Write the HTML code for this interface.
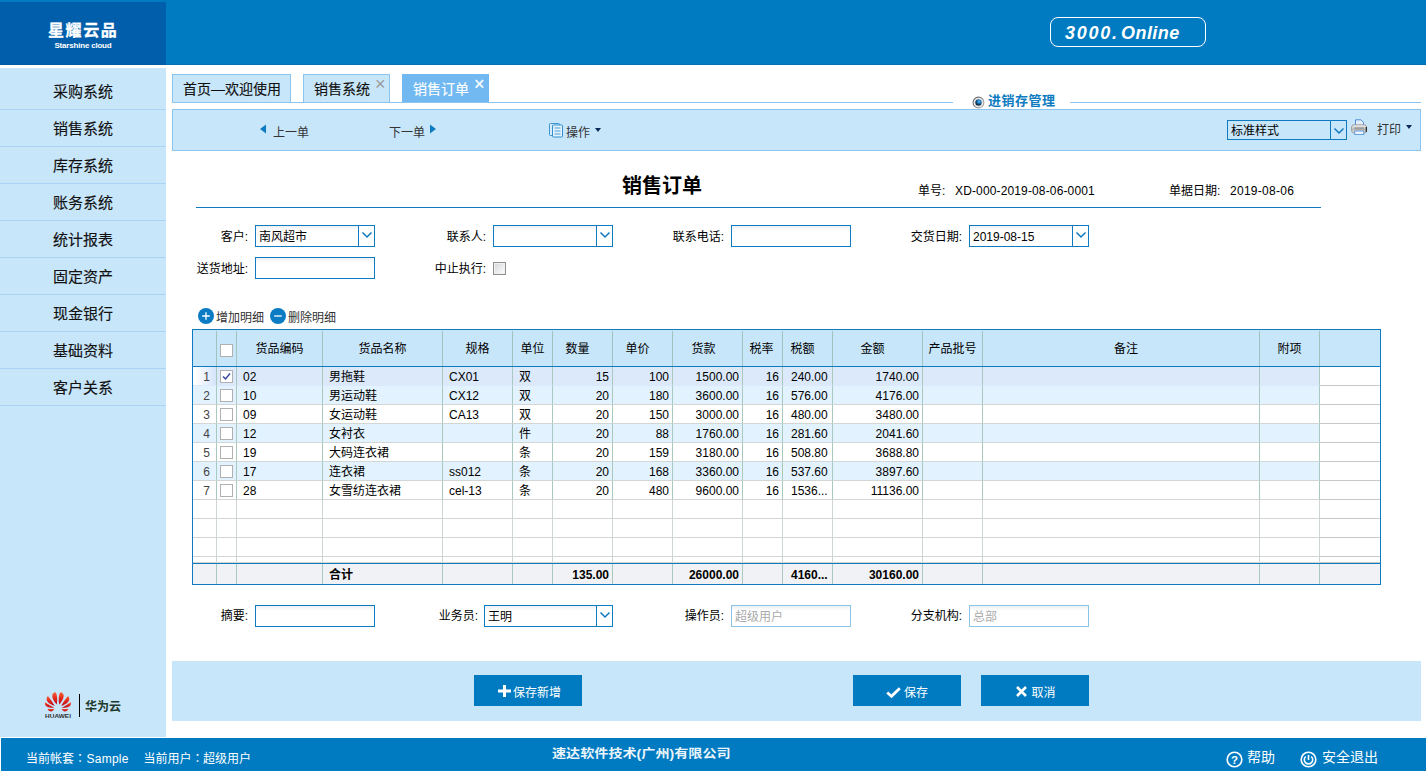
<!DOCTYPE html>
<html lang="zh-CN">
<head>
<meta charset="utf-8">
<title>销售订单</title>
<style>
*{box-sizing:border-box;margin:0;padding:0}
html,body{width:1426px;height:771px;overflow:hidden;background:#fff}
body{position:relative;font-family:"Liberation Sans","Noto Sans CJK SC",sans-serif;font-size:12px;color:#000}
.abs{position:absolute}
#hdr{left:0;top:0;width:1426px;height:65px;background:#007bc1;border-bottom:1px solid #0070b6}
#logo{left:0;top:2px;width:166px;height:63px;background:#005eab;border-bottom:1px solid #0059a5;color:#fff;text-align:center}
#logo .t1{position:absolute;left:0;width:166px;top:19px;font-size:16px;font-weight:bold;line-height:20px;letter-spacing:1.6px;text-indent:0.4px;-webkit-text-stroke:0.3px #fff}
#logo .t2{position:absolute;left:0;width:166px;top:38.5px;font-size:8px;font-weight:bold;line-height:10px;letter-spacing:-0.2px}
#badge{left:1050px;top:17px;width:156px;height:30px;border:1.5px solid #fff;border-radius:8px;color:#fff;font-style:italic;font-weight:bold;font-size:18px;line-height:31px;white-space:nowrap}
#badge span{position:absolute;top:-0.5px}
#side{left:0;top:68px;width:166px;height:669px;background:#c8e6fa}
.mi{position:absolute;left:0;width:166px;height:37px;border-bottom:1px solid #a9d4f5;text-align:center;font-size:15px;line-height:38px;color:#111;-webkit-text-stroke:0.15px #111}
.tab{position:absolute;top:74px;height:28px;border:1px solid #8cc4f0;border-bottom:none;background:#c8e6fa;font-size:14px;line-height:29px;padding-left:10px;color:#111}
.tab{-webkit-text-stroke:0.15px #111}
.tab.act{background:#72b9f2;border-color:#72b9f2;color:#fff;-webkit-text-stroke:0.15px #fff}
.tab .x{position:absolute;top:-5px;font-size:18px;color:#999;font-weight:normal;-webkit-text-stroke:0;margin-left:1px}
.tab.act .x{color:#fff;-webkit-text-stroke:0.25px #fff}
.hl{position:absolute;height:1px;background:#8cc4f0}
#tb{left:172px;top:109px;width:1249px;height:42px;background:#c8e6fa;border:1px solid #8cc4f0}
.lbl{position:absolute;text-align:right;font-size:12px;line-height:14px;white-space:nowrap}
.inp{position:absolute;height:22px;border:1px solid #0e7ac0;background:linear-gradient(#edf0f3,#fff 5px);font-size:12px;line-height:22px;padding-left:3px;white-space:nowrap}
.inp.dis{border-color:#8cc4e8;color:#aaa}
.inp .dd{position:absolute;right:0;top:0;width:16px;height:20px;border-left:1px solid #0e7ac0;background:#fff}
.inp .dd svg{position:absolute;left:2px;top:5px}
#grid{left:192px;top:329px;width:1189px;height:256px;border:1px solid #0e7ac0;background:#fff;overflow:hidden}
#gh{position:absolute;left:0;top:0;width:1187px;height:37px;background:#c8e6fa;border-bottom:1px solid #0e7ac0}
.hc{position:absolute;top:1px;height:35px;line-height:36px;text-align:center;font-size:12px;border-right:1px solid #9fc4c0}
.row{position:absolute;left:0;width:1187px;height:19px}
.c{position:absolute;top:0;height:19px;line-height:19px;font-size:12px;white-space:nowrap;overflow:hidden;border-right:1px solid #a9c8c0;border-bottom:1px solid #d2d6d4}
.r{text-align:right;padding-right:3px}
.rn{text-align:right;padding-right:6px;color:#444}
.l{padding-left:6px}
.btn{position:absolute;top:675px;height:31px;width:108px;background:#007bc1;color:#fff;font-size:12px;line-height:37px;text-align:center;overflow:hidden}
#ftr{left:1px;top:738px;width:1425px;height:33px;background:#007bc1;color:#fff}
.cb{position:absolute;left:3px;width:13px;height:13px;border:1px solid #b0b0b0;background:#fff;display:block}
.cb svg{position:absolute;left:0;top:0}
.ft{top:751px;color:#fff;font-size:12px;line-height:16px;white-space:nowrap}
.cl{font-family:"Liberation Sans","Noto Sans CJK JP",sans-serif}
</style>
</head>
<body>
<div id="hdr" class="abs"></div>
<div id="logo" class="abs"><div class="t1">星耀云品</div><div class="t2">Starshine cloud</div></div>
<div id="badge" class="abs"><span style="left:14px;letter-spacing:1.7px">3000</span><span style="left:61px">.</span><span style="left:70px;letter-spacing:0.45px">Online</span></div>
<div id="side" class="abs"></div>
<div class="mi" style="top:73px">采购系统</div>
<div class="mi" style="top:110px">销售系统</div>
<div class="mi" style="top:147px">库存系统</div>
<div class="mi" style="top:184px">账务系统</div>
<div class="mi" style="top:221px">统计报表</div>
<div class="mi" style="top:258px">固定资产</div>
<div class="mi" style="top:295px">现金银行</div>
<div class="mi" style="top:332px">基础资料</div>
<div class="mi" style="top:369px">客户关系</div>
<div class="abs" style="left:79px;top:694px;width:1px;height:23px;background:#000"></div>
<div class="abs" style="left:85px;top:699px;font-size:12px;font-weight:bold;line-height:16px;color:#1f3a2c">华为云</div>
<svg class="abs" style="left:44px;top:691px" width="29" height="28" viewBox="0 0 29 28">
<defs><linearGradient id="hw" x1="0" y1="0" x2="0" y2="1"><stop offset="0" stop-color="#f4683c"/><stop offset="0.450" stop-color="#e62a1e"/><stop offset="1" stop-color="#b90c1a"/></linearGradient>
<g id="hwp"><path d="M14.300 12.800C13.600 8 13.800 2.500 15.500 0.400C18 0.300 19.200 2.500 18.800 5C18.300 8 16.200 11 14.300 12.800Z"/><path d="M16.400 14.200C18.500 10.500 21.500 6 23.300 4.300C25 6 24.800 8.500 23.500 10C21.800 12 19 13.500 16.400 14.200Z"/><path d="M16.800 15.900C20 14.500 23.500 11.800 26.100 10.500C26.600 12.500 25.600 14.300 24 15C22 15.900 19 16.200 16.800 15.900Z"/><path d="M16.600 16.900C19 17.500 21.500 17.300 23.600 16.900C23 18.600 21.500 19.600 20 19.600C18.600 19.500 17.400 18.300 16.600 16.900Z"/></g></defs>
<g transform="translate(0.800,0.800)" fill="url(#hw)"><use href="#hwp"/><use href="#hwp" transform="translate(26.300,0) scale(-1,1)"/></g>
<text x="14" y="26.700" font-size="5.400" font-weight="bold" text-anchor="middle" fill="#333" font-family="Liberation Sans, sans-serif" textLength="26" lengthAdjust="spacingAndGlyphs">HUAWEI</text>
</svg>

<div class="tab" style="left:172px;width:119px">首页—欢迎使用</div>
<div class="tab" style="left:303px;width:87px">销售系统<span class="x" style="left:70px">×</span></div>
<div class="tab act" style="left:402px;width:87px">销售订单<span class="x" style="left:70px">×</span></div>
<div class="hl" style="left:172px;top:102px;width:781px"></div>
<div class="hl" style="left:1070px;top:102px;width:351px"></div>
<svg class="abs" style="left:971.500px;top:95.500px" width="13" height="13" viewBox="0 0 13 13"><defs><radialGradient id="rd" cx="0.600" cy="0.350" r="0.700"><stop offset="0" stop-color="#5ec0f8"/><stop offset="0.400" stop-color="#1f78b8"/><stop offset="0.850" stop-color="#0b2238"/><stop offset="1" stop-color="#0b2238"/></radialGradient><linearGradient id="rr" x1="0" y1="0" x2="1" y2="1"><stop offset="0" stop-color="#555"/><stop offset="1" stop-color="#bbb"/></linearGradient></defs><circle cx="6.500" cy="6.500" r="5.400" fill="#f4f4f4" stroke="url(#rr)" stroke-width="1.100"/><circle cx="6.500" cy="6.500" r="4" fill="#fff" stroke="#d5d5d5" stroke-width="0.600"/><circle cx="6.500" cy="6.500" r="3.200" fill="url(#rd)"/></svg>
<div class="abs" style="left:988px;top:93px;font-size:13px;font-weight:bold;color:#0e7ac0;line-height:16px;letter-spacing:0.5px">进销存管理</div>

<div id="tb" class="abs"></div>
<svg class="abs" style="left:259px;top:124px" width="8" height="10" viewBox="0 0 8 10"><path d="M7 0.500 L1 5 L7 9.500 Z" fill="#0e7ac0"/></svg>
<div class="abs" style="left:273px;top:125px;font-size:12px;line-height:16px;color:#333">上一单</div>
<div class="abs" style="left:389px;top:125px;font-size:12px;line-height:16px;color:#333">下一单</div>
<svg class="abs" style="left:429px;top:124px" width="8" height="10" viewBox="0 0 8 10"><path d="M1 0.500 L7 5 L1 9.500 Z" fill="#0e7ac0"/></svg>
<svg class="abs" style="left:549px;top:123px" width="15" height="15" viewBox="0 0 15 15"><rect x="0.500" y="0.500" width="10" height="12" rx="0.800" fill="#d6ecfb" stroke="#3d97d3"/><rect x="3.500" y="2" width="10" height="12" rx="0.800" fill="#e4f2fc" stroke="#2f8fd0"/><path d="M5.500 5h6M5.500 8h6M5.500 11h6" stroke="#4aa0d8" stroke-width="1.200"/></svg>
<div class="abs" style="left:566px;top:125px;font-size:12px;line-height:16px;color:#333">操作</div>
<svg class="abs" style="left:595px;top:128px" width="6" height="4" viewBox="0 0 6 4"><path d="M0 0h6L3 4Z" fill="#0a2a5e"/></svg>
<div class="inp" style="left:1227px;top:120px;width:120px;height:20px;line-height:20px;background:#c8e6fa">标准样式<span class="dd" style="height:18px;background:#c8e6fa"><svg width="12" height="8" viewBox="0 0 12 8" style="top:6px"><path d="M1.500 1.500L6 6L10.500 1.500" fill="none" stroke="#0e7ac0" stroke-width="1.500"/></svg></span></div>
<svg class="abs" style="left:1351px;top:119px" width="17" height="17" viewBox="0 0 17 17"><defs><linearGradient id="pg" x1="0" y1="0" x2="0" y2="1"><stop offset="0" stop-color="#f6f6f6"/><stop offset="0.550" stop-color="#b9b9b9"/><stop offset="1" stop-color="#ececec"/></linearGradient></defs><path d="M4.500 7V0.800h5.500l2.500 2.500V7" fill="#e3edfb" stroke="#4a8fd8"/><rect x="0.600" y="5.800" width="15" height="8.200" rx="2.400" fill="url(#pg)" stroke="#8c8c8c" stroke-width="0.800"/><path d="M15.300 8v5" stroke="#222" stroke-width="1.200"/><rect x="3.500" y="8.200" width="9.500" height="2.200" fill="#7d7d7d" opacity="0.550"/><rect x="3.800" y="12" width="9" height="3.600" fill="#eef4fd" stroke="#4a8fd8" stroke-width="0.800"/></svg>
<div class="abs" style="left:1377px;top:122px;font-size:12px;line-height:16px;color:#333">打印</div>
<svg class="abs" style="left:1405.500px;top:125px" width="6" height="4" viewBox="0 0 6 4"><path d="M0 0h6L3 4Z" fill="#0a2a5e"/></svg>

<div class="abs" style="left:622px;top:173px;font-size:20px;font-weight:bold;line-height:26px">销售订单</div>
<div class="abs" style="left:918px;top:184px;line-height:14px">单号:</div>
<div class="abs" style="left:955px;top:184px;line-height:14px;letter-spacing:0.14px">XD-000-2019-08-06-0001</div>
<div class="abs" style="left:1169px;top:184px;line-height:14px">单据日期:</div>
<div class="abs" style="left:1230px;top:184px;line-height:14px;letter-spacing:0.27px">2019-08-06</div>
<div class="abs" style="left:196px;top:207px;width:1125px;height:1px;background:#0e7ac0"></div>
<div class="lbl" style="left:148px;width:100px;top:230px">客户:</div>
<div class="inp " style="left:255px;top:225px;width:120px">南风超市<span class="dd"><svg width="12" height="8" viewBox="0 0 12 8"><path d="M1.500 1.500L6 6L10.500 1.500" fill="none" stroke="#0e7ac0" stroke-width="1.500"/></svg></span></div>
<div class="lbl" style="left:386px;width:100px;top:230px">联系人:</div>
<div class="inp " style="left:493px;top:225px;width:120px"><span class="dd"><svg width="12" height="8" viewBox="0 0 12 8"><path d="M1.500 1.500L6 6L10.500 1.500" fill="none" stroke="#0e7ac0" stroke-width="1.500"/></svg></span></div>
<div class="lbl" style="left:624px;width:100px;top:230px">联系电话:</div>
<div class="inp " style="left:731px;top:225px;width:120px"></div>
<div class="lbl" style="left:862px;width:100px;top:230px">交货日期:</div>
<div class="inp " style="left:969px;top:225px;width:120px">2019-08-15<span class="dd"><svg width="12" height="8" viewBox="0 0 12 8"><path d="M1.500 1.500L6 6L10.500 1.500" fill="none" stroke="#0e7ac0" stroke-width="1.500"/></svg></span></div>
<div class="lbl" style="left:148px;width:100px;top:262px">送货地址:</div>
<div class="inp " style="left:255px;top:257px;width:120px"></div>
<div class="lbl" style="left:386px;width:100px;top:262px">中止执行:</div>
<div class="abs" style="left:493px;top:262px;width:13px;height:13px;border:1px solid #8e8f8f;background:linear-gradient(135deg,#d3d6da,#f6f6f6 80%);box-shadow:inset 0 0 0 1px #f2f2f2"></div>
<svg class="abs" style="left:198px;top:308px" width="16" height="16" viewBox="0 0 16 16"><circle cx="8" cy="8" r="8" fill="#0b7bc3"/><path d="M4.200 8h7.600M8 4.200v7.600" stroke="#fff" stroke-width="1.300"/></svg>
<div class="abs" style="left:216px;top:310px;line-height:16px;color:#333">增加明细</div>
<svg class="abs" style="left:270px;top:308px" width="16" height="16" viewBox="0 0 16 16"><circle cx="8" cy="8" r="8" fill="#0b7bc3"/><path d="M4.200 8h7.600" stroke="#fff" stroke-width="1.300"/></svg>
<div class="abs" style="left:288px;top:310px;line-height:16px;color:#333">删除明细</div>

<div id="grid" class="abs">
<div id="gh"><div class="hc" style="left:0px;width:24px;"></div><div class="hc" style="left:24px;width:20px;"><span class="cb" style="top:13px"></span></div><div class="hc" style="left:44px;width:86px;">货品编码</div><div class="hc" style="left:130px;width:120px;">货品名称</div><div class="hc" style="left:250px;width:70px;">规格</div><div class="hc" style="left:320px;width:40px;">单位</div><div class="hc" style="left:360px;width:60px;padding-right:10px;">数量</div><div class="hc" style="left:420px;width:60px;padding-right:10px;">单价</div><div class="hc" style="left:480px;width:70px;padding-right:8px;">货款</div><div class="hc" style="left:550px;width:40px;padding-right:2px;">税率</div><div class="hc" style="left:590px;width:50px;padding-right:10px;">税额</div><div class="hc" style="left:640px;width:90px;padding-right:10px;">金额</div><div class="hc" style="left:730px;width:60px;">产品批号</div><div class="hc" style="left:790px;width:277px;padding-left:10px;">备注</div><div class="hc" style="left:1067px;width:60px;">附项</div><div class="hc" style="left:1127px;width:61px;border-right:none;"></div></div>
<div class="row" style="top:37px;height:19px"><div class="c rn" style="left:0px;width:24px;height:19px;line-height:21px;background:#dbe9fb;border-bottom-color:#dbe9fb;background:linear-gradient(90deg,#fff 10%,#d4e4fa 100%);">1</div><div class="c" style="left:24px;width:20px;height:19px;line-height:21px;background:#dbe9fb;border-bottom-color:#dbe9fb;"><span class="cb" style="top:3px"><svg width="11" height="11" viewBox="0 0 11 11"><path d="M2 5.500L4.500 8L9 2.500" fill="none" stroke="#3b4aa0" stroke-width="1.5"/></svg></span></div><div class="c l" style="left:44px;width:86px;height:19px;line-height:21px;background:#dbe9fb;border-bottom-color:#dbe9fb;">02</div><div class="c l" style="left:130px;width:120px;height:19px;line-height:21px;background:#dbe9fb;border-bottom-color:#dbe9fb;">男拖鞋</div><div class="c l" style="left:250px;width:70px;height:19px;line-height:21px;background:#dbe9fb;border-bottom-color:#dbe9fb;">CX01</div><div class="c l" style="left:320px;width:40px;height:19px;line-height:21px;background:#dbe9fb;border-bottom-color:#dbe9fb;">双</div><div class="c r" style="left:360px;width:60px;height:19px;line-height:21px;background:#dbe9fb;border-bottom-color:#dbe9fb;">15</div><div class="c r" style="left:420px;width:60px;height:19px;line-height:21px;background:#dbe9fb;border-bottom-color:#dbe9fb;">100</div><div class="c r" style="left:480px;width:70px;height:19px;line-height:21px;background:#dbe9fb;border-bottom-color:#dbe9fb;">1500.00</div><div class="c r" style="left:550px;width:40px;height:19px;line-height:21px;background:#dbe9fb;border-bottom-color:#dbe9fb;">16</div><div class="c l" style="left:590px;width:50px;height:19px;line-height:21px;background:#dbe9fb;border-bottom-color:#dbe9fb;padding-left:8px;">240.00</div><div class="c r" style="left:640px;width:90px;height:19px;line-height:21px;background:#dbe9fb;border-bottom-color:#dbe9fb;">1740.00</div><div class="c l" style="left:730px;width:60px;height:19px;line-height:21px;background:#dbe9fb;border-bottom-color:#dbe9fb;"></div><div class="c l" style="left:790px;width:277px;height:19px;line-height:21px;background:#dbe9fb;border-bottom-color:#dbe9fb;"></div><div class="c l" style="left:1067px;width:60px;height:19px;line-height:21px;background:#dbe9fb;border-bottom-color:#dbe9fb;"></div><div class="c l" style="left:1127px;width:61px;height:19px;line-height:21px;border-right:none;border-bottom-color:#c8c8c8;"></div></div>
<div class="row" style="top:56px;height:19px"><div class="c rn" style="left:0px;width:24px;height:19px;line-height:21px;background:#e2f2fe;">2</div><div class="c" style="left:24px;width:20px;height:19px;line-height:21px;background:#e2f2fe;"><span class="cb" style="top:3px"></span></div><div class="c l" style="left:44px;width:86px;height:19px;line-height:21px;background:#e2f2fe;">10</div><div class="c l" style="left:130px;width:120px;height:19px;line-height:21px;background:#e2f2fe;">男运动鞋</div><div class="c l" style="left:250px;width:70px;height:19px;line-height:21px;background:#e2f2fe;">CX12</div><div class="c l" style="left:320px;width:40px;height:19px;line-height:21px;background:#e2f2fe;">双</div><div class="c r" style="left:360px;width:60px;height:19px;line-height:21px;background:#e2f2fe;">20</div><div class="c r" style="left:420px;width:60px;height:19px;line-height:21px;background:#e2f2fe;">180</div><div class="c r" style="left:480px;width:70px;height:19px;line-height:21px;background:#e2f2fe;">3600.00</div><div class="c r" style="left:550px;width:40px;height:19px;line-height:21px;background:#e2f2fe;">16</div><div class="c l" style="left:590px;width:50px;height:19px;line-height:21px;background:#e2f2fe;padding-left:8px;">576.00</div><div class="c r" style="left:640px;width:90px;height:19px;line-height:21px;background:#e2f2fe;">4176.00</div><div class="c l" style="left:730px;width:60px;height:19px;line-height:21px;background:#e2f2fe;"></div><div class="c l" style="left:790px;width:277px;height:19px;line-height:21px;background:#e2f2fe;"></div><div class="c l" style="left:1067px;width:60px;height:19px;line-height:21px;background:#e2f2fe;"></div><div class="c l" style="left:1127px;width:61px;height:19px;line-height:21px;border-right:none;border-bottom-color:#c8c8c8;"></div></div>
<div class="row" style="top:75px;height:19px"><div class="c rn" style="left:0px;width:24px;height:19px;line-height:21px;">3</div><div class="c" style="left:24px;width:20px;height:19px;line-height:21px;"><span class="cb" style="top:3px"></span></div><div class="c l" style="left:44px;width:86px;height:19px;line-height:21px;">09</div><div class="c l" style="left:130px;width:120px;height:19px;line-height:21px;">女运动鞋</div><div class="c l" style="left:250px;width:70px;height:19px;line-height:21px;">CA13</div><div class="c l" style="left:320px;width:40px;height:19px;line-height:21px;">双</div><div class="c r" style="left:360px;width:60px;height:19px;line-height:21px;">20</div><div class="c r" style="left:420px;width:60px;height:19px;line-height:21px;">150</div><div class="c r" style="left:480px;width:70px;height:19px;line-height:21px;">3000.00</div><div class="c r" style="left:550px;width:40px;height:19px;line-height:21px;">16</div><div class="c l" style="left:590px;width:50px;height:19px;line-height:21px;padding-left:8px;">480.00</div><div class="c r" style="left:640px;width:90px;height:19px;line-height:21px;">3480.00</div><div class="c l" style="left:730px;width:60px;height:19px;line-height:21px;"></div><div class="c l" style="left:790px;width:277px;height:19px;line-height:21px;"></div><div class="c l" style="left:1067px;width:60px;height:19px;line-height:21px;"></div><div class="c l" style="left:1127px;width:61px;height:19px;line-height:21px;border-right:none;border-bottom-color:#c8c8c8;"></div></div>
<div class="row" style="top:94px;height:19px"><div class="c rn" style="left:0px;width:24px;height:19px;line-height:21px;background:#e2f2fe;">4</div><div class="c" style="left:24px;width:20px;height:19px;line-height:21px;background:#e2f2fe;"><span class="cb" style="top:3px"></span></div><div class="c l" style="left:44px;width:86px;height:19px;line-height:21px;background:#e2f2fe;">12</div><div class="c l" style="left:130px;width:120px;height:19px;line-height:21px;background:#e2f2fe;">女衬衣</div><div class="c l" style="left:250px;width:70px;height:19px;line-height:21px;background:#e2f2fe;"></div><div class="c l" style="left:320px;width:40px;height:19px;line-height:21px;background:#e2f2fe;">件</div><div class="c r" style="left:360px;width:60px;height:19px;line-height:21px;background:#e2f2fe;">20</div><div class="c r" style="left:420px;width:60px;height:19px;line-height:21px;background:#e2f2fe;">88</div><div class="c r" style="left:480px;width:70px;height:19px;line-height:21px;background:#e2f2fe;">1760.00</div><div class="c r" style="left:550px;width:40px;height:19px;line-height:21px;background:#e2f2fe;">16</div><div class="c l" style="left:590px;width:50px;height:19px;line-height:21px;background:#e2f2fe;padding-left:8px;">281.60</div><div class="c r" style="left:640px;width:90px;height:19px;line-height:21px;background:#e2f2fe;">2041.60</div><div class="c l" style="left:730px;width:60px;height:19px;line-height:21px;background:#e2f2fe;"></div><div class="c l" style="left:790px;width:277px;height:19px;line-height:21px;background:#e2f2fe;"></div><div class="c l" style="left:1067px;width:60px;height:19px;line-height:21px;background:#e2f2fe;"></div><div class="c l" style="left:1127px;width:61px;height:19px;line-height:21px;border-right:none;border-bottom-color:#c8c8c8;"></div></div>
<div class="row" style="top:113px;height:19px"><div class="c rn" style="left:0px;width:24px;height:19px;line-height:21px;">5</div><div class="c" style="left:24px;width:20px;height:19px;line-height:21px;"><span class="cb" style="top:3px"></span></div><div class="c l" style="left:44px;width:86px;height:19px;line-height:21px;">19</div><div class="c l" style="left:130px;width:120px;height:19px;line-height:21px;">大码连衣裙</div><div class="c l" style="left:250px;width:70px;height:19px;line-height:21px;"></div><div class="c l" style="left:320px;width:40px;height:19px;line-height:21px;">条</div><div class="c r" style="left:360px;width:60px;height:19px;line-height:21px;">20</div><div class="c r" style="left:420px;width:60px;height:19px;line-height:21px;">159</div><div class="c r" style="left:480px;width:70px;height:19px;line-height:21px;">3180.00</div><div class="c r" style="left:550px;width:40px;height:19px;line-height:21px;">16</div><div class="c l" style="left:590px;width:50px;height:19px;line-height:21px;padding-left:8px;">508.80</div><div class="c r" style="left:640px;width:90px;height:19px;line-height:21px;">3688.80</div><div class="c l" style="left:730px;width:60px;height:19px;line-height:21px;"></div><div class="c l" style="left:790px;width:277px;height:19px;line-height:21px;"></div><div class="c l" style="left:1067px;width:60px;height:19px;line-height:21px;"></div><div class="c l" style="left:1127px;width:61px;height:19px;line-height:21px;border-right:none;border-bottom-color:#c8c8c8;"></div></div>
<div class="row" style="top:132px;height:19px"><div class="c rn" style="left:0px;width:24px;height:19px;line-height:21px;background:#e2f2fe;">6</div><div class="c" style="left:24px;width:20px;height:19px;line-height:21px;background:#e2f2fe;"><span class="cb" style="top:3px"></span></div><div class="c l" style="left:44px;width:86px;height:19px;line-height:21px;background:#e2f2fe;">17</div><div class="c l" style="left:130px;width:120px;height:19px;line-height:21px;background:#e2f2fe;">连衣裙</div><div class="c l" style="left:250px;width:70px;height:19px;line-height:21px;background:#e2f2fe;">ss012</div><div class="c l" style="left:320px;width:40px;height:19px;line-height:21px;background:#e2f2fe;">条</div><div class="c r" style="left:360px;width:60px;height:19px;line-height:21px;background:#e2f2fe;">20</div><div class="c r" style="left:420px;width:60px;height:19px;line-height:21px;background:#e2f2fe;">168</div><div class="c r" style="left:480px;width:70px;height:19px;line-height:21px;background:#e2f2fe;">3360.00</div><div class="c r" style="left:550px;width:40px;height:19px;line-height:21px;background:#e2f2fe;">16</div><div class="c l" style="left:590px;width:50px;height:19px;line-height:21px;background:#e2f2fe;padding-left:8px;">537.60</div><div class="c r" style="left:640px;width:90px;height:19px;line-height:21px;background:#e2f2fe;">3897.60</div><div class="c l" style="left:730px;width:60px;height:19px;line-height:21px;background:#e2f2fe;"></div><div class="c l" style="left:790px;width:277px;height:19px;line-height:21px;background:#e2f2fe;"></div><div class="c l" style="left:1067px;width:60px;height:19px;line-height:21px;background:#e2f2fe;"></div><div class="c l" style="left:1127px;width:61px;height:19px;line-height:21px;border-right:none;border-bottom-color:#c8c8c8;"></div></div>
<div class="row" style="top:151px;height:19px"><div class="c rn" style="left:0px;width:24px;height:19px;line-height:21px;">7</div><div class="c" style="left:24px;width:20px;height:19px;line-height:21px;"><span class="cb" style="top:3px"></span></div><div class="c l" style="left:44px;width:86px;height:19px;line-height:21px;">28</div><div class="c l" style="left:130px;width:120px;height:19px;line-height:21px;">女雪纺连衣裙</div><div class="c l" style="left:250px;width:70px;height:19px;line-height:21px;">cel-13</div><div class="c l" style="left:320px;width:40px;height:19px;line-height:21px;">条</div><div class="c r" style="left:360px;width:60px;height:19px;line-height:21px;">20</div><div class="c r" style="left:420px;width:60px;height:19px;line-height:21px;">480</div><div class="c r" style="left:480px;width:70px;height:19px;line-height:21px;">9600.00</div><div class="c r" style="left:550px;width:40px;height:19px;line-height:21px;">16</div><div class="c l" style="left:590px;width:50px;height:19px;line-height:21px;padding-left:8px;">1536...</div><div class="c r" style="left:640px;width:90px;height:19px;line-height:21px;">11136.00</div><div class="c l" style="left:730px;width:60px;height:19px;line-height:21px;"></div><div class="c l" style="left:790px;width:277px;height:19px;line-height:21px;"></div><div class="c l" style="left:1067px;width:60px;height:19px;line-height:21px;"></div><div class="c l" style="left:1127px;width:61px;height:19px;line-height:21px;border-right:none;border-bottom-color:#c8c8c8;"></div></div>
<div class="row" style="top:170px;height:19px"><div class="c r" style="left:0px;width:24px;height:19px;line-height:21px;border-right-color:#cdd6d2;"></div><div class="c" style="left:24px;width:20px;height:19px;line-height:21px;border-right-color:#cdd6d2;"></div><div class="c l" style="left:44px;width:86px;height:19px;line-height:21px;border-right-color:#cdd6d2;"></div><div class="c l" style="left:130px;width:120px;height:19px;line-height:21px;border-right-color:#cdd6d2;"></div><div class="c l" style="left:250px;width:70px;height:19px;line-height:21px;border-right-color:#cdd6d2;"></div><div class="c l" style="left:320px;width:40px;height:19px;line-height:21px;border-right-color:#cdd6d2;"></div><div class="c r" style="left:360px;width:60px;height:19px;line-height:21px;border-right-color:#cdd6d2;"></div><div class="c r" style="left:420px;width:60px;height:19px;line-height:21px;border-right-color:#cdd6d2;"></div><div class="c r" style="left:480px;width:70px;height:19px;line-height:21px;border-right-color:#cdd6d2;"></div><div class="c r" style="left:550px;width:40px;height:19px;line-height:21px;border-right-color:#cdd6d2;"></div><div class="c l" style="left:590px;width:50px;height:19px;line-height:21px;border-right-color:#cdd6d2;padding-left:8px;"></div><div class="c r" style="left:640px;width:90px;height:19px;line-height:21px;border-right-color:#cdd6d2;"></div><div class="c l" style="left:730px;width:60px;height:19px;line-height:21px;border-right-color:#cdd6d2;"></div><div class="c l" style="left:790px;width:277px;height:19px;line-height:21px;border-right-color:#cdd6d2;"></div><div class="c l" style="left:1067px;width:60px;height:19px;line-height:21px;border-right-color:#cdd6d2;"></div><div class="c l" style="left:1127px;width:61px;height:19px;line-height:21px;border-right:none;border-bottom-color:#c8c8c8;"></div></div>
<div class="row" style="top:189px;height:19px"><div class="c r" style="left:0px;width:24px;height:19px;line-height:21px;border-right-color:#cdd6d2;"></div><div class="c" style="left:24px;width:20px;height:19px;line-height:21px;border-right-color:#cdd6d2;"></div><div class="c l" style="left:44px;width:86px;height:19px;line-height:21px;border-right-color:#cdd6d2;"></div><div class="c l" style="left:130px;width:120px;height:19px;line-height:21px;border-right-color:#cdd6d2;"></div><div class="c l" style="left:250px;width:70px;height:19px;line-height:21px;border-right-color:#cdd6d2;"></div><div class="c l" style="left:320px;width:40px;height:19px;line-height:21px;border-right-color:#cdd6d2;"></div><div class="c r" style="left:360px;width:60px;height:19px;line-height:21px;border-right-color:#cdd6d2;"></div><div class="c r" style="left:420px;width:60px;height:19px;line-height:21px;border-right-color:#cdd6d2;"></div><div class="c r" style="left:480px;width:70px;height:19px;line-height:21px;border-right-color:#cdd6d2;"></div><div class="c r" style="left:550px;width:40px;height:19px;line-height:21px;border-right-color:#cdd6d2;"></div><div class="c l" style="left:590px;width:50px;height:19px;line-height:21px;border-right-color:#cdd6d2;padding-left:8px;"></div><div class="c r" style="left:640px;width:90px;height:19px;line-height:21px;border-right-color:#cdd6d2;"></div><div class="c l" style="left:730px;width:60px;height:19px;line-height:21px;border-right-color:#cdd6d2;"></div><div class="c l" style="left:790px;width:277px;height:19px;line-height:21px;border-right-color:#cdd6d2;"></div><div class="c l" style="left:1067px;width:60px;height:19px;line-height:21px;border-right-color:#cdd6d2;"></div><div class="c l" style="left:1127px;width:61px;height:19px;line-height:21px;border-right:none;border-bottom-color:#c8c8c8;"></div></div>
<div class="row" style="top:208px;height:19px"><div class="c r" style="left:0px;width:24px;height:19px;line-height:21px;border-right-color:#cdd6d2;"></div><div class="c" style="left:24px;width:20px;height:19px;line-height:21px;border-right-color:#cdd6d2;"></div><div class="c l" style="left:44px;width:86px;height:19px;line-height:21px;border-right-color:#cdd6d2;"></div><div class="c l" style="left:130px;width:120px;height:19px;line-height:21px;border-right-color:#cdd6d2;"></div><div class="c l" style="left:250px;width:70px;height:19px;line-height:21px;border-right-color:#cdd6d2;"></div><div class="c l" style="left:320px;width:40px;height:19px;line-height:21px;border-right-color:#cdd6d2;"></div><div class="c r" style="left:360px;width:60px;height:19px;line-height:21px;border-right-color:#cdd6d2;"></div><div class="c r" style="left:420px;width:60px;height:19px;line-height:21px;border-right-color:#cdd6d2;"></div><div class="c r" style="left:480px;width:70px;height:19px;line-height:21px;border-right-color:#cdd6d2;"></div><div class="c r" style="left:550px;width:40px;height:19px;line-height:21px;border-right-color:#cdd6d2;"></div><div class="c l" style="left:590px;width:50px;height:19px;line-height:21px;border-right-color:#cdd6d2;padding-left:8px;"></div><div class="c r" style="left:640px;width:90px;height:19px;line-height:21px;border-right-color:#cdd6d2;"></div><div class="c l" style="left:730px;width:60px;height:19px;line-height:21px;border-right-color:#cdd6d2;"></div><div class="c l" style="left:790px;width:277px;height:19px;line-height:21px;border-right-color:#cdd6d2;"></div><div class="c l" style="left:1067px;width:60px;height:19px;line-height:21px;border-right-color:#cdd6d2;"></div><div class="c l" style="left:1127px;width:61px;height:19px;line-height:21px;border-right:none;border-bottom-color:#c8c8c8;"></div></div>
<div class="row" style="top:227px;height:6px"><div class="c r" style="left:0px;width:24px;height:6px;line-height:8px;border-right-color:#cdd6d2;"></div><div class="c" style="left:24px;width:20px;height:6px;line-height:8px;border-right-color:#cdd6d2;"></div><div class="c l" style="left:44px;width:86px;height:6px;line-height:8px;border-right-color:#cdd6d2;"></div><div class="c l" style="left:130px;width:120px;height:6px;line-height:8px;border-right-color:#cdd6d2;"></div><div class="c l" style="left:250px;width:70px;height:6px;line-height:8px;border-right-color:#cdd6d2;"></div><div class="c l" style="left:320px;width:40px;height:6px;line-height:8px;border-right-color:#cdd6d2;"></div><div class="c r" style="left:360px;width:60px;height:6px;line-height:8px;border-right-color:#cdd6d2;"></div><div class="c r" style="left:420px;width:60px;height:6px;line-height:8px;border-right-color:#cdd6d2;"></div><div class="c r" style="left:480px;width:70px;height:6px;line-height:8px;border-right-color:#cdd6d2;"></div><div class="c r" style="left:550px;width:40px;height:6px;line-height:8px;border-right-color:#cdd6d2;"></div><div class="c l" style="left:590px;width:50px;height:6px;line-height:8px;border-right-color:#cdd6d2;padding-left:8px;"></div><div class="c r" style="left:640px;width:90px;height:6px;line-height:8px;border-right-color:#cdd6d2;"></div><div class="c l" style="left:730px;width:60px;height:6px;line-height:8px;border-right-color:#cdd6d2;"></div><div class="c l" style="left:790px;width:277px;height:6px;line-height:8px;border-right-color:#cdd6d2;"></div><div class="c l" style="left:1067px;width:60px;height:6px;line-height:8px;border-right-color:#cdd6d2;"></div><div class="c l" style="left:1127px;width:61px;height:6px;line-height:8px;border-right:none;border-bottom-color:#c8c8c8;"></div></div>
<div class="abs" style="left:0;top:233px;width:1187px;height:1px;background:#0e7ac0"></div><div class="row" style="top:234px;height:20px"><div class="c r" style="left:0px;width:24px;height:20px;line-height:22px;background:#f0f2f5;border-bottom:none;font-weight:bold;"></div><div class="c" style="left:24px;width:20px;height:20px;line-height:22px;background:#f0f2f5;border-bottom:none;font-weight:bold;"></div><div class="c l" style="left:44px;width:86px;height:20px;line-height:22px;background:#f0f2f5;border-bottom:none;font-weight:bold;"></div><div class="c l" style="left:130px;width:120px;height:20px;line-height:22px;background:#f0f2f5;border-bottom:none;font-weight:bold;">合计</div><div class="c l" style="left:250px;width:70px;height:20px;line-height:22px;background:#f0f2f5;border-bottom:none;font-weight:bold;"></div><div class="c l" style="left:320px;width:40px;height:20px;line-height:22px;background:#f0f2f5;border-bottom:none;font-weight:bold;"></div><div class="c r" style="left:360px;width:60px;height:20px;line-height:22px;background:#f0f2f5;border-bottom:none;font-weight:bold;">135.00</div><div class="c r" style="left:420px;width:60px;height:20px;line-height:22px;background:#f0f2f5;border-bottom:none;font-weight:bold;"></div><div class="c r" style="left:480px;width:70px;height:20px;line-height:22px;background:#f0f2f5;border-bottom:none;font-weight:bold;">26000.00</div><div class="c r" style="left:550px;width:40px;height:20px;line-height:22px;background:#f0f2f5;border-bottom:none;font-weight:bold;"></div><div class="c l" style="left:590px;width:50px;height:20px;line-height:22px;background:#f0f2f5;border-bottom:none;font-weight:bold;padding-left:8px;">4160...</div><div class="c r" style="left:640px;width:90px;height:20px;line-height:22px;background:#f0f2f5;border-bottom:none;font-weight:bold;">30160.00</div><div class="c l" style="left:730px;width:60px;height:20px;line-height:22px;background:#f0f2f5;border-bottom:none;font-weight:bold;"></div><div class="c l" style="left:790px;width:277px;height:20px;line-height:22px;background:#f0f2f5;border-bottom:none;font-weight:bold;"></div><div class="c l" style="left:1067px;width:60px;height:20px;line-height:22px;background:#f0f2f5;border-bottom:none;font-weight:bold;"></div><div class="c l" style="left:1127px;width:61px;height:20px;line-height:22px;border-right:none;border-bottom-color:#c8c8c8;background:#f0f2f5;border-bottom:none;font-weight:bold;"></div></div>
</div>

<div class="lbl" style="left:148px;width:100px;top:609px">摘要:</div>
<div class="inp " style="left:255px;top:605px;width:120px"></div>
<div class="lbl" style="left:378px;width:100px;top:609px">业务员:</div>
<div class="inp " style="left:484px;top:605px;width:129px">王明<span class="dd"><svg width="12" height="8" viewBox="0 0 12 8"><path d="M1.500 1.500L6 6L10.500 1.500" fill="none" stroke="#0e7ac0" stroke-width="1.500"/></svg></span></div>
<div class="lbl" style="left:624px;width:100px;top:609px">操作员:</div>
<div class="inp dis" style="left:731px;top:605px;width:120px">超级用户</div>
<div class="lbl" style="left:862px;width:100px;top:609px">分支机构:</div>
<div class="inp dis" style="left:969px;top:605px;width:120px">总部</div>
<div class="abs" style="left:172px;top:661px;width:1249px;height:60px;background:#c8e6fa"></div>
<div class="btn" style="left:474px"><svg width="13" height="12" viewBox="0 0 13 12" style="vertical-align:0px;margin-right:2px;margin-left:3px"><path d="M6.500 0v12M0 6h13" stroke="#fff" stroke-width="3"/></svg>保存新增</div>
<div class="btn" style="left:853px"><svg width="15" height="11" viewBox="0 0 15 11" style="vertical-align:-1px;margin-right:3px"><path d="M1.200 5.500L5.500 9.300L13.800 1.200" fill="none" stroke="#fff" stroke-width="2.800"/></svg>保存</div>
<div class="btn" style="left:981px"><svg width="11" height="11" viewBox="0 0 11 11" style="vertical-align:0px;margin-right:4px;margin-left:2px"><path d="M1 1L10 10M10 1L1 10" fill="none" stroke="#fff" stroke-width="2.600"/></svg>取消</div>
<div id="ftr" class="abs"></div>
<div class="abs ft" style="left:26px">当前帐套<span class="cl" lang="ja">：</span></div><div class="abs ft" style="left:86.500px;letter-spacing:0.250px">Sample</div><div class="abs ft" style="left:143.500px">当前用户<span class="cl" lang="ja">：</span></div><div class="abs ft" style="left:203px">超级用户</div>
<div class="abs" style="left:552px;top:746px;color:#eaf4fb;font-size:12px;font-weight:bold;line-height:16px;white-space:nowrap;transform:scaleX(1.175);transform-origin:0 0">速达软件技术(广州)有限公司</div>
<svg class="abs" style="left:1225.500px;top:751px" width="17" height="17" viewBox="-0.500 -0.500 17 17"><circle cx="8" cy="8" r="7.300" fill="none" stroke="#fff" stroke-width="1.600"/><text x="8" y="12.200" font-size="11.500" font-weight="bold" fill="#fff" text-anchor="middle" font-family="Liberation Sans, sans-serif">?</text></svg>
<div class="abs" style="left:1247px;top:748px;color:#fff;font-size:14px;line-height:18px">帮助</div>
<svg class="abs" style="left:1299.500px;top:751px" width="17" height="17" viewBox="-0.500 -0.500 17 17"><circle cx="8" cy="8" r="7.300" fill="none" stroke="#fff" stroke-width="1.600"/><path d="M5.300 5A4.200 4.200 0 1 0 10.700 5M8 3.600V8.600" fill="none" stroke="#fff" stroke-width="1.600"/></svg>
<div class="abs" style="left:1322px;top:748px;color:#fff;font-size:14px;line-height:18px">安全退出</div>

</body>
</html>
